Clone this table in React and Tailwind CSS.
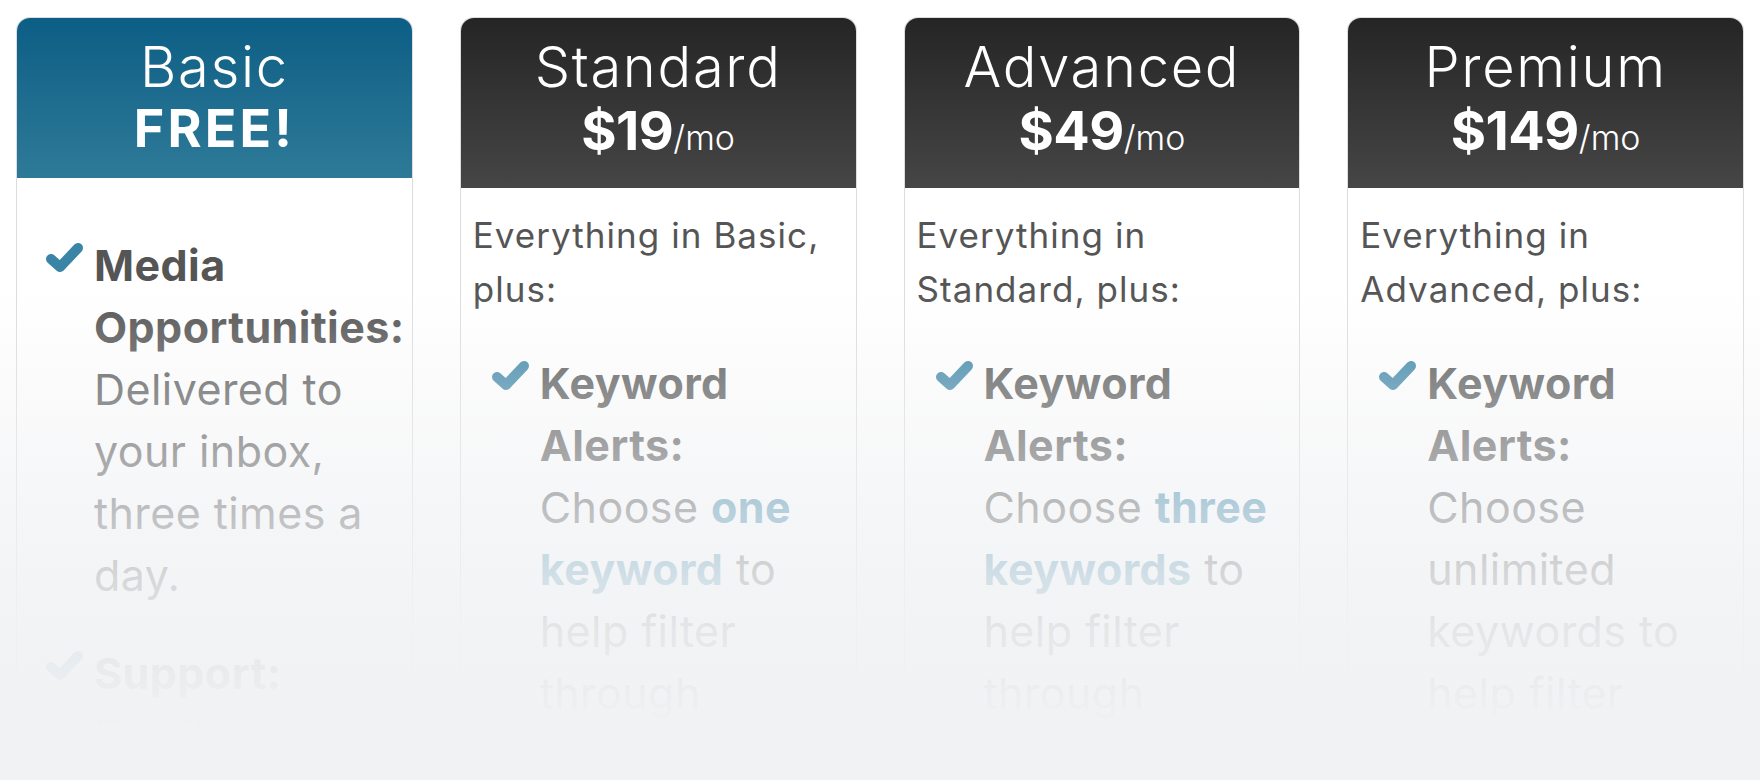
import React from 'react';

const plans = [
  {
    name: 'Basic',
    free: true,
    features: [
      {
        title: 'Media Opportunities:',
        body: <>Delivered to your inbox, three times a day.</>,
      },
      {
        title: 'Support:',
        body: <>Email support for all your questions.</>,
      },
    ],
  },
  {
    name: 'Standard',
    price: '$19',
    intro: ['Everything in Basic,', 'plus:'],
    features: [
      {
        title: 'Keyword Alerts:',
        body: (
          <>
            Choose <b className="font-bold text-[#3a86a8]">one keyword</b> to help filter through hundreds of daily opportunities.
          </>
        ),
      },
    ],
  },
  {
    name: 'Advanced',
    price: '$49',
    intro: ['Everything in', 'Standard, plus:'],
    features: [
      {
        title: 'Keyword Alerts:',
        body: (
          <>
            Choose <b className="font-bold text-[#3a86a8]">three keywords</b> to help filter through hundreds of daily opportunities.
          </>
        ),
      },
    ],
  },
  {
    name: 'Premium',
    price: '$149',
    intro: ['Everything in', 'Advanced, plus:'],
    features: [
      {
        title: 'Keyword Alerts:',
        body: <>Choose unlimited keywords to help filter through hundreds of daily opportunities.</>,
      },
    ],
  },
];

function Check() {
  return (
    <svg viewBox="0 0 40 30" className="w-[40px] h-[30px] shrink-0 mt-[8px]">
      <polyline
        points="7,17 16,25 34,6"
        fill="none"
        stroke="#3a84a6"
        strokeWidth="10"
        strokeLinecap="round"
        strokeLinejoin="round"
      />
    </svg>
  );
}

function PlanCard({ plan }) {
  return (
    <div className="h-[656px] rounded-t-[14px] border border-b-0 border-[#dcdcdc] bg-white">
      {plan.free ? (
        <div className="h-[160px] rounded-t-[13px] bg-gradient-to-b from-[#0b5e85] to-[#2d7a98] flex flex-col items-center pt-[19px] text-white">
          <div className="text-[56px] leading-[60px] font-light tracking-[0.03em]">{plan.name}</div>
          <div className="text-[52px] leading-[64px] font-bold tracking-[0.06em]">FREE!</div>
        </div>
      ) : (
        <div className="h-[170px] rounded-t-[13px] bg-gradient-to-b from-[#252525] to-[#464646] flex flex-col items-center pt-[19px] text-white">
          <div className="text-[56px] leading-[60px] font-light tracking-[0.03em]">{plan.name}</div>
          <div className="leading-[68px]">
            <span className="text-[54px] font-bold tracking-[-0.01em]">{plan.price}</span>
            <span className="text-[34px] font-light">/mo</span>
          </div>
        </div>
      )}

      <div className={plan.free ? 'pt-[56px] pr-[12px] pl-[27px]' : 'pt-[20px] px-[12px]'}>
        {plan.intro && (
          <p className="text-[35px] leading-[54px] tracking-[0.03em] text-[#555]">
            {plan.intro[0]}
            <br />
            {plan.intro[1]}
          </p>
        )}
        <ul className={plan.free ? 'flex flex-col gap-[36px]' : 'mt-[36px] pl-[17px] flex flex-col gap-[36px]'}>
          {plan.features.map((f) => (
            <li key={f.title} className="flex gap-[10px]">
              <Check />
              <p className="text-[43px] leading-[62px] tracking-[0.01em] text-[#555]">
                <b className="font-bold">{f.title}</b> {f.body}
              </p>
            </li>
          ))}
        </ul>
      </div>
    </div>
  );
}

export default function App() {
  return (
    <div className="relative h-[780px] overflow-hidden bg-white [font-family:Inter,'Open_Sans',sans-serif]">
      <div className="grid grid-cols-4 gap-[47px] px-[16px] pt-[17px]">
        {plans.map((p) => (
          <PlanCard key={p.name} plan={p} />
        ))}
      </div>
      <div className="pointer-events-none absolute inset-0 bg-[linear-gradient(to_bottom,rgba(241,242,244,0)_290px,rgba(241,242,244,0.33)_385px,rgba(241,242,244,0.67)_510px,rgba(241,242,244,0.82)_575px,rgba(241,242,244,0.92)_630px,rgba(241,242,244,0.96)_680px,#f1f2f4_730px)]" />
    </div>
  );
}
